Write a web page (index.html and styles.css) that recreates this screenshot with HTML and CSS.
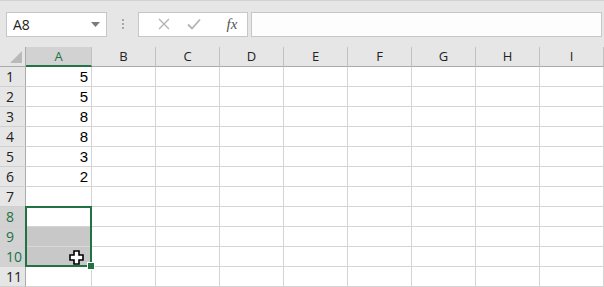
FILE: index.html
```html
<!DOCTYPE html>
<html lang="en">
<head>
  <meta charset="UTF-8" />
  <title>Sheet</title>
  <link rel="stylesheet" href="styles.css">
</head>
<body>

  <!-- barra de formulas -->
  <div class="toolbar">
    <div class="namebox">
      <span>A8</span>
      <svg class="arrow" width="9" height="5" viewBox="0 0 9 5"><path d="M0 0h9L4.5 5z" fill="#7a7a7a"/></svg>
    </div>
    <div class="dots"><i></i><i></i><i></i></div>
    <div class="fbuttons">
      <svg width="14" height="14" viewBox="0 0 14 14"><path d="M2 2l10 10M12 2L2 12" stroke="#b4b4b4" stroke-width="1.4" fill="none"/></svg>
      <svg width="16" height="14" viewBox="0 0 16 14"><path d="M2 7.5l4 4 8-9" stroke="#b4b4b4" stroke-width="1.8" fill="none"/></svg>
      <span class="fx">fx</span>
    </div>
    <div class="finput"></div>
  </div>

  <!-- hoja -->
  <div class="sheet" id="sheet">
    <div class="corner"><div class="tri"></div></div>
    <div class="colhead active">A</div>
    <div class="colhead">B</div>
    <div class="colhead">C</div>
    <div class="colhead">D</div>
    <div class="colhead">E</div>
    <div class="colhead">F</div>
    <div class="colhead">G</div>
    <div class="colhead">H</div>
    <div class="colhead">I</div>
  </div>

  <script>
    const valores = [5, 5, 8, 8, 3, 2];
    const hoja = document.getElementById("sheet");

    for (let r = 1; r <= 11; r++) {
      const sel = r >= 8 && r <= 10;
      const cab = document.createElement("div");
      cab.className = sel ? "rowhead active" : "rowhead";
      cab.textContent = r;
      hoja.appendChild(cab);

      for (let c = 0; c < 9; c++) {
        const celda = document.createElement("div");
        celda.className = "cell";
        if (c === 0) {
          if (valores[r - 1] !== undefined) celda.textContent = valores[r - 1];
          if (r === 9 || r === 10) celda.classList.add("shade");
          if (r === 8) {
            const marco = document.createElement("div");
            marco.className = "selection";
            marco.innerHTML = '<div class="handle"></div>';
            celda.appendChild(marco);
          }
          if (r === 10) {
            celda.innerHTML = '<svg class="cursor" width="15" height="15" viewBox="0 0 15 15"><path d="M5 1h5v4h4v5h-4v4H5v-4H1V5h4z" fill="#fff" stroke="#000" stroke-width="1.6"/></svg>';
          }
        }
        hoja.appendChild(celda);
      }
    }
  </script>
</body>
</html>
```

FILE: styles.css
```css
body {
  margin: 0;
  background-color: #e6e6e6;
  font-family: 'Open Sans', 'Liberation Sans', sans-serif;
  width: 604px;
  height: 287px;
  overflow: hidden;
}

.toolbar {
  display: flex;
  align-items: center;
  height: 47px;
  padding-left: 6px;
  border-top: 1px solid #d2d2d2;
  box-sizing: border-box;
}

.namebox {
  width: 101px;
  height: 25px;
  box-sizing: border-box;
  background-color: #fff;
  border: 1px solid #c6c6c6;
  display: flex;
  align-items: center;
  justify-content: space-between;
  padding: 0 6px 0 6px;
  font-size: 14px;
  color: #222;
}

.namebox .arrow {
  margin-top: 1px;
}

.dots {
  width: 31px;
  display: flex;
  flex-direction: column;
  align-items: center;
  gap: 2px;
}

.dots i {
  width: 2px;
  height: 2px;
  background-color: #a8a8a8;
}

.fbuttons {
  width: 110px;
  height: 25px;
  box-sizing: border-box;
  background-color: #fff;
  border: 1px solid #c6c6c6;
  display: flex;
  align-items: center;
  justify-content: space-around;
  padding: 0 2px 0 10px;
}

.fx {
  font-family: 'Liberation Serif', serif;
  font-style: italic;
  font-size: 15px;
  color: #555;
  margin-left: 10px;
}

.finput {
  flex: 1;
  height: 25px;
  margin-left: 3px;
  margin-right: 2px;
  box-sizing: border-box;
  background-color: #fdfdfd;
  border: 1px solid #c6c6c6;
}

.sheet {
  display: grid;
  grid-template-columns: 26px 66px repeat(8, 64px);
  grid-auto-rows: 20px;
  background-color: #fff;
}

.corner {
  background-color: #e6e6e6;
  border-bottom: 1px solid #ababab;
  border-right: 1px solid #ababab;
  box-sizing: border-box;
  position: relative;
}

.tri {
  position: absolute;
  right: 3px;
  bottom: 3px;
  width: 0;
  height: 0;
  border-left: 12px solid transparent;
  border-bottom: 12px solid #b9b9b9;
}

.colhead {
  background-color: #e6e6e6;
  border-bottom: 1px solid #ababab;
  border-right: 1px solid #c2c2c2;
  box-sizing: border-box;
  text-align: center;
  font-size: 13px;
  line-height: 19px;
  color: #222;
}

.colhead.active {
  background-color: #d2d2d2;
  border-bottom: 2px solid #217346;
  color: #217346;
}

.rowhead {
  background-color: #e6e6e6;
  border-bottom: 1px solid #d0d0d0;
  border-right: 1px solid #ababab;
  box-sizing: border-box;
  text-align: left;
  padding-left: 6px;
  font-size: 14px;
  line-height: 19px;
  color: #222;
}

.rowhead.active {
  background-color: #d2d2d2;
  color: #217346;
}

.cell {
  border-bottom: 1px solid #d4d4d4;
  border-right: 1px solid #d4d4d4;
  box-sizing: border-box;
  text-align: right;
  padding-right: 3px;
  font-family: 'Liberation Sans', sans-serif;
  font-size: 15px;
  line-height: 20px;
  color: #000;
  position: relative;
}

.cell.shade {
  background-color: #c8c8c8;
  border-right-color: #c8c8c8;
  border-bottom-color: #d8d8d8;
}

.selection {
  position: absolute;
  left: -1px;
  top: -1px;
  width: 67px;
  height: 61px;
  border: 2px solid #217346;
  box-sizing: border-box;
  z-index: 2;
}

.handle {
  position: absolute;
  right: -5px;
  bottom: -5px;
  width: 6px;
  height: 6px;
  background-color: #217346;
  border: 1px solid #fff;
}

.cursor {
  position: absolute;
  left: 43px;
  top: 3px;
}
```
